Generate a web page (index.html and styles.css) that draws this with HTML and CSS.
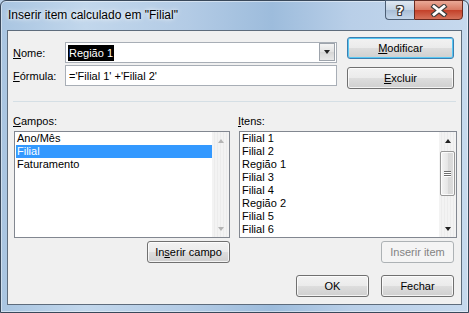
FILE: index.html
```html
<!DOCTYPE html>
<html lang="pt">
<head>
    <meta charset="UTF-8">
    <title>Inserir item calculado</title>
    <link rel="stylesheet" href="styles.css">
</head>
<body>
    <div class="window">
        <div class="titlebar">
            <span class="title">Inserir item calculado em "Filial"</span>
            <div class="caption">
                <div class="cap-btn help">?</div>
                <div class="cap-btn close">
                    <svg width="18" height="13" viewBox="0 0 18 13">
                        <path d="M4 2.5 L14 10.5 M14 2.5 L4 10.5" stroke="#3b3b3b" stroke-width="5" stroke-linecap="square"/>
                        <path d="M4 2.5 L14 10.5 M14 2.5 L4 10.5" stroke="#fff" stroke-width="2.8" stroke-linecap="square"/>
                    </svg>
                </div>
            </div>
        </div>

        <div class="client">
            <div class="top">
                <div class="fields">
                    <label class="lbl"><u>N</u>ome:</label>
                    <div class="combo">
                        <span class="sel">Região 1</span>
                        <span class="drop"><i class="arrow down"></i></span>
                    </div>
                    <label class="lbl"><u>F</u>órmula:</label>
                    <div class="textbox">='Filial 1' +'Filial 2'</div>
                </div>
                <div class="actions">
                    <button class="btn default"><u>M</u>odificar</button>
                    <button class="btn"><u>E</u>xcluir</button>
                </div>
            </div>

            <div class="sep"></div>

            <div class="lists">
                <div class="col">
                    <div class="lbl head"><u>C</u>ampos:</div>
                    <div class="listbox">
                        <ul class="items">
                            <li>Ano/Mês</li>
                            <li class="on">Filial</li>
                            <li>Faturamento</li>
                        </ul>
                        <div class="scroll off">
                            <i class="arrow up"></i>
                            <i class="arrow down"></i>
                        </div>
                    </div>
                    <button class="btn side">In<u>s</u>erir campo</button>
                </div>
                <div class="col">
                    <div class="lbl head"><u>I</u>tens:</div>
                    <div class="listbox">
                        <ul class="items">
                            <li>Filial 1</li>
                            <li>Filial 2</li>
                            <li>Região 1</li>
                            <li>Filial 3</li>
                            <li>Filial 4</li>
                            <li>Região 2</li>
                            <li>Filial 5</li>
                            <li>Filial 6</li>
                        </ul>
                        <div class="scroll">
                            <i class="arrow up"></i>
                            <div class="thumb"><span></span><span></span><span></span></div>
                            <i class="arrow down"></i>
                        </div>
                    </div>
                    <button class="btn side item" disabled>Inserir item</button>
                </div>
            </div>

            <div class="footer">
                <button class="btn">OK</button>
                <button class="btn">Fechar</button>
            </div>
        </div>
    </div>
</body>
</html>
```

FILE: styles.css
```css
*{
    margin:0;
    padding:0;
    box-sizing:border-box;
}
body{
    background-color:#b9d0e8;
    font-family:"Liberation Sans", Arial, sans-serif;
    font-size:11px;
    color:#000;
}
.window{
    width:469px;
    height:313px;
    display:flex;
    flex-direction:column;
    border:1px solid #39485a;
    border-radius:6px 6px 0 0;
    background:linear-gradient(to right, #a9c5e1 0%, #c2d7ec 18%, #b3cbe5 40%, #9dbcdc 58%, #b9cfe8 75%, #c6d9ee 100%);
    box-shadow:inset 0 0 0 1px rgba(255,255,255,0.45);
}
.titlebar{
    height:29px;
    display:flex;
    align-items:flex-start;
    padding-left:7px;
}
.title{
    font-size:12px;
    line-height:15px;
    padding-top:7px;
    text-shadow:0 0 6px #fff, 0 0 3px #e8f0f8;
}
.caption{
    display:flex;
    margin-left:auto;
    margin-right:5px;
    margin-top:-1px;
}
.cap-btn{
    height:20px;
    border:1px solid #4d5f75;
    display:flex;
    align-items:center;
    justify-content:center;
}
.help{
    width:29px;
    border-right:none;
    border-radius:0 0 0 4px;
    background:linear-gradient(#dfe8f2 0%, #c3d3e4 48%, #a9bed6 52%, #c4d6ea 100%);
    color:#fff;
    font-family:"DejaVu Sans", sans-serif;
    font-weight:bold;
    font-size:13px;
    text-shadow:1px 0 #3b3b3b, -1px 0 #3b3b3b, 0 1px #3b3b3b, 0 -1px #3b3b3b, 1px 1px #3b3b3b, -1px -1px #3b3b3b, 1px -1px #3b3b3b, -1px 1px #3b3b3b;
}
.close{
    width:49px;
    border-color:#6a2a20;
    border-radius:0 0 4px 0;
    background:linear-gradient(#eaa997 0%, #d87a64 48%, #c4412a 52%, #d5725b 100%);
}
.client{
    flex:1;
    margin:0 6px 7px 6px;
    border:1px solid #5e6c7c;
    background-color:#f0f0f0;
    padding:0 7px 0 5px;
    display:flex;
    flex-direction:column;
}
.lbl u, .btn u{
    text-decoration:underline;
    text-underline-offset:1px;
}
.top{
    display:flex;
    align-items:flex-start;
    padding-top:6px;
}
.fields{
    display:grid;
    grid-template-columns:52px 272px;
    grid-auto-rows:21px;
    row-gap:2px;
    margin-top:5px;
    align-items:center;
}
.combo, .textbox{
    height:21px;
    border:1px solid #a8aeb6;
    background-color:#fff;
    display:flex;
    align-items:center;
}
.combo{
    position:relative;
    padding-left:2px;
}
.sel{
    background-color:#000;
    color:#fff;
    line-height:16px;
    padding:0 1px;
}
.drop{
    position:absolute;
    right:1px;
    top:0;
    width:16px;
    height:18px;
    border:1px solid #9da3ab;
    background:linear-gradient(#f4f4f4, #e2e2e2 50%, #d6d6d6 51%, #e8e8e8);
    display:flex;
    align-items:center;
    justify-content:center;
}
.textbox{
    padding-left:3px;
}
.actions{
    display:flex;
    flex-direction:column;
    gap:8px;
    margin-left:10px;
}
.btn{
    height:22px;
    width:107px;
    font-family:"Liberation Sans", Arial, sans-serif;
    font-size:11px;
    color:#000;
    border:1px solid #707070;
    border-radius:3px;
    background:linear-gradient(#f2f2f2 0%, #ebebeb 48%, #dddddd 52%, #cfcfcf 100%);
    box-shadow:inset 0 0 0 1px rgba(255,255,255,0.75);
}
.btn.default{
    border-color:#3c7fb1;
    box-shadow:inset 0 0 0 1px #58c8f4;
}
.btn:disabled{
    border-color:#adb2b5;
    background:#f4f4f4;
    color:#838383;
    box-shadow:none;
}
.sep{
    margin-top:12px;
    margin-right:-2px;
    border-top:1px solid #d5dfe5;
}
.lists{
    display:grid;
    grid-template-columns:216px 218px;
    column-gap:9px;
    margin-left:1px;
    margin-top:13px;
}
.col{
    display:flex;
    flex-direction:column;
}
.head{
    line-height:13px;
    margin-bottom:3px;
    margin-left:-1px;
}
.listbox{
    height:107px;
    border:1px solid #828790;
    background-color:#fff;
    display:flex;
}
.items{
    list-style:none;
    flex:1;
    padding-left:1px;
}
.items li{
    line-height:13px;
    padding-left:1px;
    white-space:nowrap;
}
.items li.on{
    background-color:#3399ff;
    color:#fff;
}
.scroll{
    width:17px;
    display:flex;
    flex-direction:column;
    align-items:center;
    padding:7px 0 6px;
    background:repeating-linear-gradient(90deg, #f3f3f3 0, #f3f3f3 2px, #ececec 2px, #ececec 3px);
}
.scroll .arrow.down{
    margin-top:auto;
}
.arrow{
    display:block;
    width:0;
    height:0;
    border-left:3.5px solid transparent;
    border-right:3.5px solid transparent;
}
.arrow.down{
    border-top:4px solid #222;
}
.arrow.up{
    border-bottom:4px solid #222;
}
.scroll.off .arrow.down{
    border-top-color:#b4b4b4;
}
.scroll.off .arrow.up{
    border-bottom-color:#b4b4b4;
}
.thumb{
    width:15px;
    height:45px;
    margin-top:8px;
    border:1px solid #979797;
    border-radius:2px;
    background:linear-gradient(to right, #f4f4f4, #e6e6e6 50%, #d8d8d8 51%, #dcdcdc);
    box-shadow:inset 0 0 0 1px rgba(255,255,255,0.8);
    display:flex;
    flex-direction:column;
    align-items:center;
    justify-content:center;
    gap:1px;
}
.thumb span{
    display:block;
    width:7px;
    height:1px;
    background-color:#6d6d6d;
    box-shadow:0 1px #fff;
}
.btn.side{
    width:83px;
    margin-top:3px;
    align-self:flex-end;
}
.btn.item{
    width:73px;
    margin-right:3px;
}
.footer{
    display:flex;
    justify-content:flex-end;
    gap:12px;
    margin-top:12px;
}
.footer .btn{
    width:73px;
}
```
